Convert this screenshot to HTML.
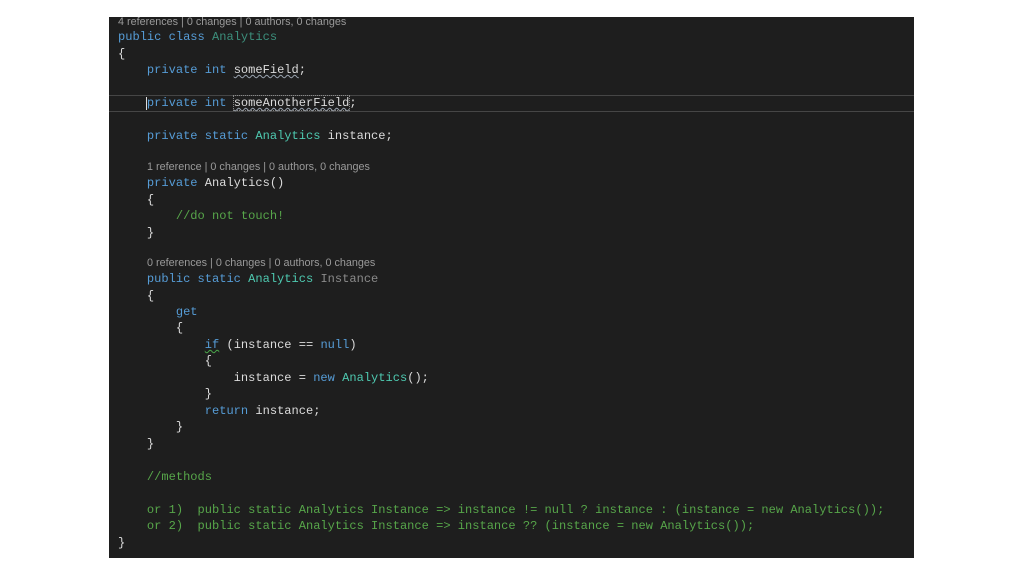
<!DOCTYPE html>
<html><head><meta charset="utf-8"><style>
html,body{margin:0;padding:0;background:#fff;width:1024px;height:576px;overflow:hidden}
#p{position:absolute;left:109px;top:17px;width:805px;height:541px;background:#1e1e1e}
.l{position:absolute;left:9px;font-family:"Liberation Mono",monospace;font-size:12.05px;line-height:16px;color:#dcdcdc;white-space:pre}
.c{position:absolute;font-family:"Liberation Sans",sans-serif;font-size:10.8px;color:#9a9a9a;white-space:pre}
.k{color:#569cd6}.t{color:#4ec9b0}.g{color:#57a64a}.d{color:#8a8a8a}.dt{color:#3c8f7c}
.sq{text-decoration:underline wavy #9aa4b0;text-decoration-thickness:1px}
.sg{text-decoration:underline wavy #4aa84a;text-decoration-thickness:1px}
</style></head><body><div id="p">
<div style="position:absolute;left:0;top:78px;width:805px;height:15px;border-top:1px solid #464646;border-bottom:1px solid #464646"></div>
<div class="c" style="left:9px;top:-1px">4 references | 0 changes | 0 authors, 0 changes</div>
<div class="l" style="top:12px"><span class="k">public class</span> <span class="dt">Analytics</span></div>
<div class="l" style="top:29px">{</div>
<div class="l" style="top:45px">    <span class="k">private int</span> <span class="sq">someField</span>;</div>
<div class="l" style="top:78px">    <span class="k">private int</span> <span class="sq" style="outline:1px dotted #888">someAnotherField</span>;</div>
<div style="position:absolute;left:37px;top:80px;width:1px;height:13px;background:#ddd"></div>
<div class="l" style="top:111px">    <span class="k">private static</span> <span class="t">Analytics</span> instance;</div>
<div class="c" style="left:38px;top:144px">1 reference | 0 changes | 0 authors, 0 changes</div>
<div class="l" style="top:158px">    <span class="k">private</span> Analytics()</div>
<div class="l" style="top:175px">    {</div>
<div class="l" style="top:191px">        <span class="g">//do not touch!</span></div>
<div class="l" style="top:208px">    }</div>
<div class="c" style="left:38px;top:240px">0 references | 0 changes | 0 authors, 0 changes</div>
<div class="l" style="top:254px">    <span class="k">public static</span> <span class="t">Analytics</span> <span class="d">Instance</span></div>
<div class="l" style="top:271px">    {</div>
<div class="l" style="top:287px">        <span class="k">get</span></div>
<div class="l" style="top:303px">        {</div>
<div class="l" style="top:320px">            <span class="k sg">if</span> (instance == <span class="k">null</span>)</div>
<div class="l" style="top:336px">            {</div>
<div class="l" style="top:353px">                instance = <span class="k">new</span> <span class="t">Analytics</span>();</div>
<div class="l" style="top:369px">            }</div>
<div class="l" style="top:386px">            <span class="k">return</span> instance;</div>
<div class="l" style="top:402px">        }</div>
<div class="l" style="top:419px">    }</div>
<div class="l" style="top:452px">    <span class="g">//methods</span></div>
<div class="l" style="top:485px">    <span class="g">or 1)  public static Analytics Instance =&gt; instance != null ? instance : (instance = new Analytics());</span></div>
<div class="l" style="top:501px">    <span class="g">or 2)  public static Analytics Instance =&gt; instance ?? (instance = new Analytics());</span></div>
<div class="l" style="top:518px">}</div>
</div></body></html>
